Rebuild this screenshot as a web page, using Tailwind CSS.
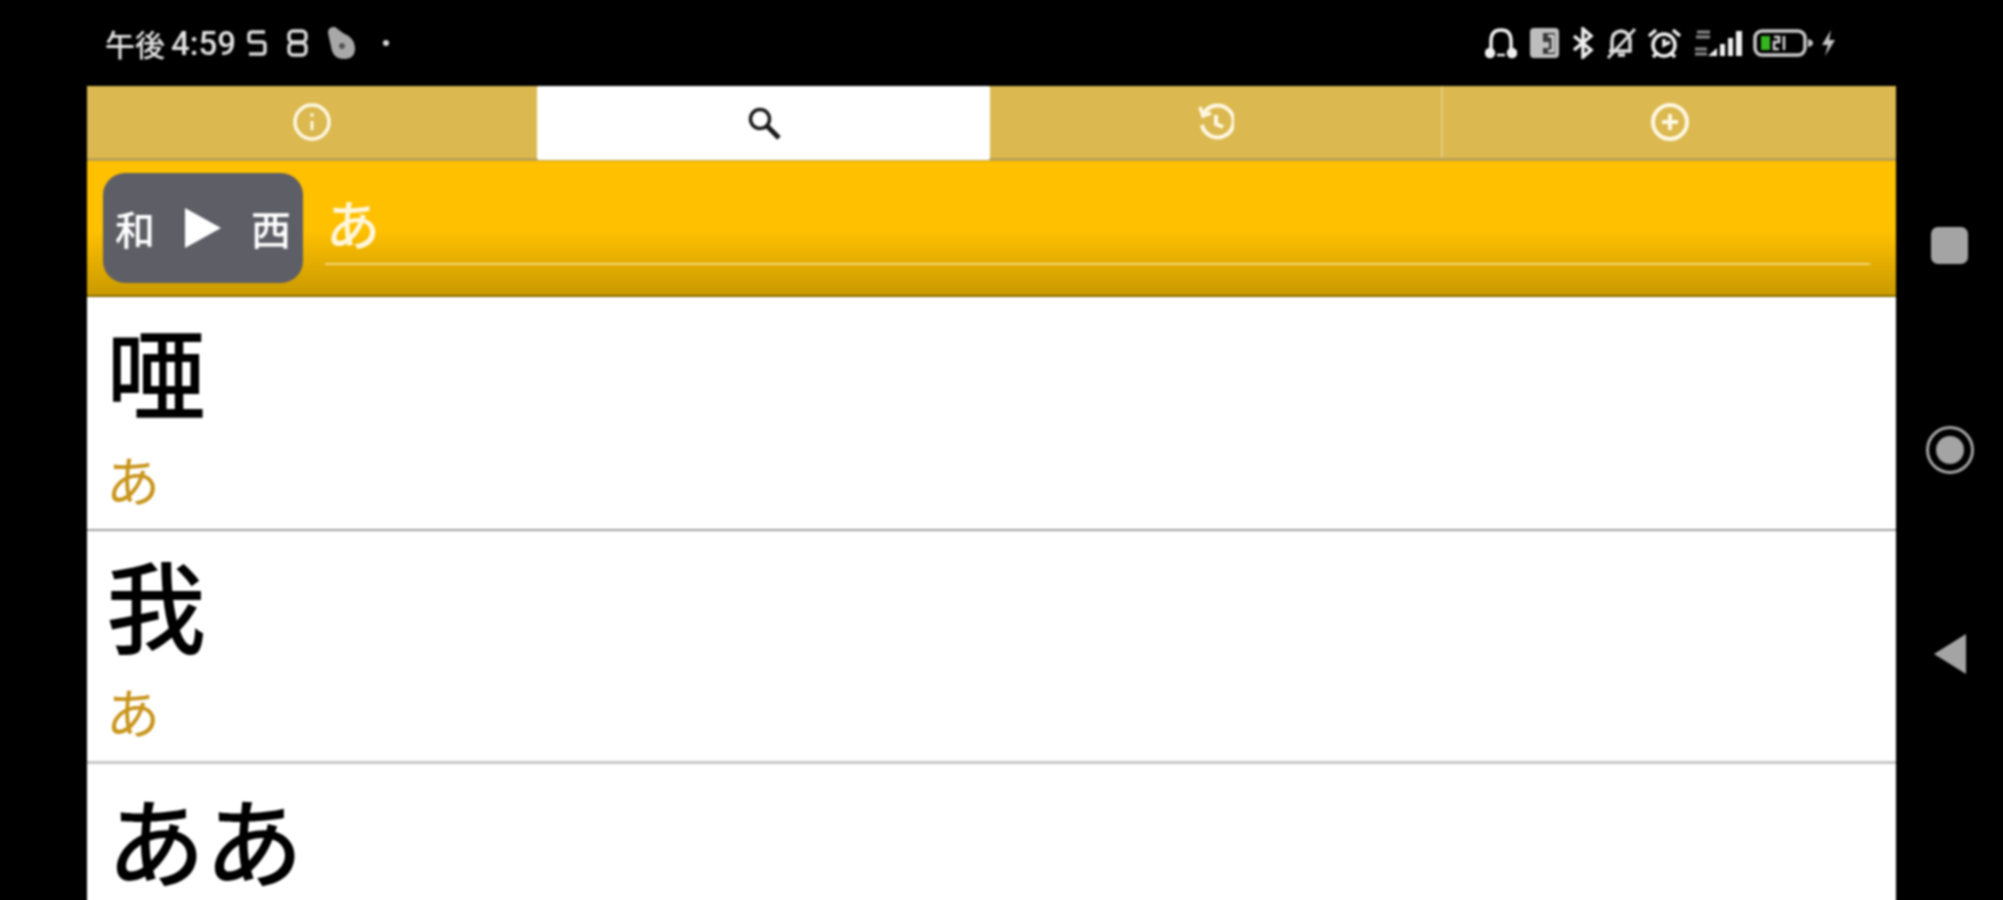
<!DOCTYPE html>
<html lang="ja" class="h-[900px] overflow-hidden bg-black">
<head>
  <meta charset="UTF-8">
  <title>Dictionary</title>
  <script src="https://cdn.jsdelivr.net/npm/@tailwindcss/browser@4"></script>
</head>
<body class="h-[900px] overflow-hidden bg-black">
  <div class="flex w-[2003px] h-[930px] bg-black font-['Noto_Sans_CJK_JP','Noto_Sans',sans-serif] blur-[1px]">
    <div class="w-[1896px] shrink-0 pl-[87px]">

      <!-- status bar -->
      <div class="h-[86px] flex items-center justify-between text-[#e0e0e0]">
        <div class="flex items-center ml-[18px]">
          <span class="text-[30px] leading-none font-medium">午後</span>
          <span class="text-[33px] leading-none ml-[6px] font-medium font-['Roboto',sans-serif]">4:59</span>
          <svg class="ml-[10px]" width="22" height="28" viewBox="0 0 22 28" fill="none" stroke="#d8d8d8" stroke-width="3.5"><path d="M19 3H6Q3 3 3 6V11Q3 13 6 13H16Q19 13 19 16V22Q19 25 16 25H3"/><path d="M3 3V13M19 13V25" stroke-width="2" opacity="0.6"/></svg>
          <svg class="ml-[18px]" width="23" height="28" viewBox="0 0 23 28" fill="none" stroke="#d8d8d8" stroke-width="3.5"><rect x="3" y="2" width="17" height="11" rx="4"/><rect x="3" y="14" width="17" height="12" rx="4"/></svg>
          <svg class="ml-[17px]" width="30" height="34" viewBox="0 0 30 34"><path d="M2 7Q2 0 9 1L17 7Q29 12 29 22Q29 33 18 33Q9 33 6 25Z" fill="#a8a8a8"/><circle cx="16" cy="20" r="3" fill="#555"/></svg>
          <span class="ml-[27px] w-[6px] h-[6px] rounded-full bg-[#d8d8d8]"></span>
        </div>
        <div class="flex items-center mr-[60px]">
          <svg width="32" height="32" viewBox="0 0 32 32" fill="none" stroke="#f0f0f0" stroke-width="3.5"><path d="M6 25V14Q6 3 16 3Q26 3 26 14V25"/><circle cx="5" cy="26" r="3.5" fill="#f0f0f0"/><circle cx="27" cy="26" r="3.5" fill="#f0f0f0"/><path d="M12 28h8" stroke-width="2.5"/></svg>
          <svg class="ml-[12px]" width="31" height="32" viewBox="0 0 31 32"><rect x="1" y="1" width="29" height="30" rx="4" fill="#bdbdbd"/><path d="M14 6H26V27H14V21H20V15H14Z" fill="#3a3a3a"/><path d="M19 9H24V24H19" fill="none" stroke="#ddd" stroke-width="2.5"/></svg>
          <svg class="ml-[11px]" width="24" height="32" viewBox="0 0 24 32" fill="none" stroke="#f0f0f0" stroke-width="3.5"><path d="M3 9L20 23L12 30V2L20 9L3 23"/></svg>
          <svg class="ml-[10px]" width="34" height="32" viewBox="0 0 34 32" fill="none" stroke="#dcdcdc" stroke-width="3.5"><path d="M7 24V14Q7 5 16 4Q24 5 25 13V24H4M13 28H20"/><path d="M3 31L30 2" stroke-width="3"/></svg>
          <svg class="ml-[8px]" width="35" height="32" viewBox="0 0 35 32" fill="none" stroke="#f0f0f0" stroke-width="3.5"><circle cx="17" cy="18" r="11"/><path d="M17 12V18L23 15M2 9L9 3M33 9L26 3M9 27L6 30M25 27L28 30"/></svg>
          <svg class="ml-[11px]" width="50" height="32" viewBox="0 0 50 32"><path d="M4 5h13M3 10h14M2 22h12M2 27h12" stroke="#8c8c8c" stroke-width="3"/><path d="M15 29L24 21V29ZM27 17H32V29H27ZM35 11H40V29H35ZM43 4H49V29H43Z" fill="#f0f0f0"/></svg>
          <svg class="ml-[10px]" width="62" height="32" viewBox="0 0 62 32" fill="none"><rect x="2" y="4" width="50" height="24" rx="7" stroke="#c8c8c8" stroke-width="3.5"/><rect x="8" y="9" width="9" height="14" fill="#35b51f"/><path d="M21 10H26V15H21V22H26M31 9V23" stroke="#d8d8d8" stroke-width="2.5"/><path d="M55 12Q60 13 60 16Q60 19 55 20Z" fill="#c8c8c8"/></svg>
          <svg class="ml-[5px]" width="16" height="28" viewBox="0 0 16 28"><path d="M11 1L2 16H8L5 27L15 11H9Z" fill="#c4c4c4"/></svg>
        </div>
      </div>

      <!-- tabs -->
      <div class="flex h-[75px] bg-[#dbb950] border-b-[3px] border-[#b9a055]">
        <div class="w-[450px] flex items-center justify-center">
          <svg width="40" height="40" viewBox="0 0 40 40" fill="none" stroke="#fff8e4" stroke-width="3.5"><circle cx="20" cy="20" r="17"/><path d="M20 19V28" stroke-width="3"/><circle cx="20" cy="13" r="1.8" fill="#fff8e4" stroke="none"/></svg>
        </div>
        <div class="w-[453px] h-[74px] flex items-center justify-center bg-white rounded-[2px]">
          <svg width="36" height="36" viewBox="0 0 36 36" fill="none" stroke="#1a1a1a" stroke-width="3.5"><circle cx="14" cy="14" r="9.5"/><path d="M21 21L33 33" stroke-width="5"/></svg>
        </div>
        <div class="w-[453px] flex items-center justify-center border-r-[2px] border-[#e5c977]">
          <svg width="36" height="40" viewBox="0 0 36 40" fill="none" stroke="#fff8e4" stroke-width="4"><path d="M6 11A16 16 0 1 1 4 23"/><path d="M2 5L5 14L13 11" stroke-width="3.5"/><path d="M18 13V22L25 25" stroke-width="4"/></svg>
        </div>
        <div class="flex-1 flex items-center justify-center">
          <svg width="40" height="40" viewBox="0 0 40 40" fill="none" stroke="#fff8e4" stroke-width="4"><circle cx="20" cy="20" r="17"/><path d="M20 12V28M12 20H28"/></svg>
        </div>
      </div>

      <!-- search bar -->
      <div class="flex h-[136px] pt-[12px] pl-[16px] pr-[26px] bg-gradient-to-b from-[#ffc000] from-[52%] to-[#c99a00] border-b-[2px] border-[#8a6a00]">
        <div class="w-[200px] h-[110px] flex items-center justify-between px-[12px] bg-[#5e5e66] rounded-[22px] text-white text-[40px] font-medium leading-none">
          <span>和</span>
          <svg width="38" height="42" viewBox="0 0 38 42"><path d="M1 1L37 21L1 41Z" fill="#ffffff"/></svg>
          <span>西</span>
        </div>
        <div class="flex-1 ml-[22px] h-[92px] border-b-[2px] border-[#f3d77b] text-[#fff6dc] text-[54px] font-medium leading-[100px] pl-[1px]">あ</div>
      </div>

      <!-- results -->
      <div class="bg-white h-[640px]">
        <div class="h-[234px] pl-[19px] border-b-[2px] border-[#a0a0a0]">
          <div class="pt-[17px] text-black text-[100px] font-medium leading-[110px]">唖</div>
          <div class="text-[#c8941a] text-[54px] leading-[72px] mt-[19px]">あ</div>
        </div>
        <div class="h-[233px] pl-[19px] border-b-[3px] border-[#c8c8c8]">
          <div class="pt-[17px] text-black text-[100px] font-medium leading-[110px]">我</div>
          <div class="text-[#c8941a] text-[54px] leading-[72px] mt-[17px]">あ</div>
        </div>
        <div class="pl-[20px]">
          <div class="pt-[18px] text-black text-[98px] font-medium leading-[110px]">ああ</div>
        </div>
      </div>
    </div>

    <!-- android nav -->
    <div class="flex-1 flex flex-col items-center pt-[227px]">
      <div class="w-[37px] h-[37px] rounded-[7px] bg-[#a4a4a4]"></div>
      <div class="mt-[162px] w-[48px] h-[48px] rounded-full border-[3px] border-[#a4a4a4] flex items-center justify-center">
        <div class="w-[28px] h-[28px] rounded-full bg-[#a4a4a4]"></div>
      </div>
      <svg class="mt-[159px]" width="34" height="42" viewBox="0 0 34 42"><path d="M33 1V41L1 21Z" fill="#a4a4a4"/></svg>
    </div>
  </div>
</body>
</html>
